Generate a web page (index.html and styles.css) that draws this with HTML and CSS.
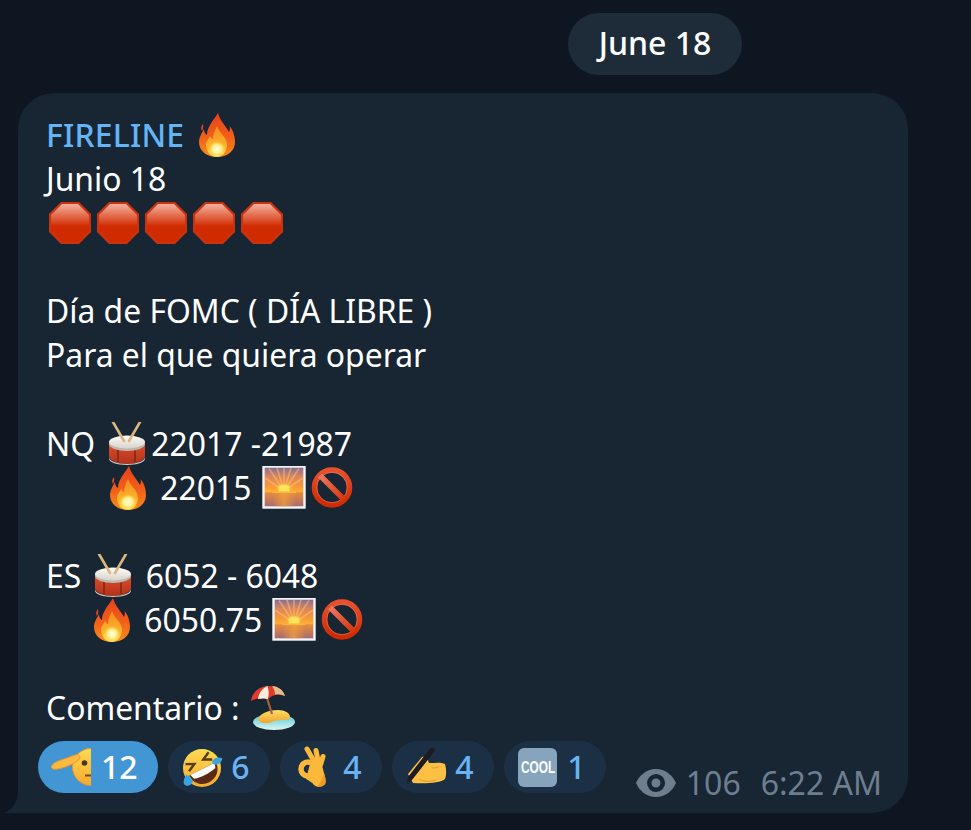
FILE: index.html
```html
<!DOCTYPE html>
<html lang="es">
<head>
<meta charset="utf-8">
<title>FIRELINE</title>
<link rel="stylesheet" href="styles.css">
</head>
<body>
<svg class="defs" width="0" height="0" aria-hidden="true">
  <defs>
    <linearGradient id="gFireOuter" x1="0" y1="0" x2="0" y2="1"><stop offset="0" stop-color="#e8401c"/><stop offset="0.55" stop-color="#f2601a"/><stop offset="1" stop-color="#f98c1c"/></linearGradient>
    <linearGradient id="gFireInner" x1="0" y1="0" x2="0" y2="1"><stop offset="0" stop-color="#f78a1e"/><stop offset="0.7" stop-color="#fbb82e"/><stop offset="1" stop-color="#ffe25c"/></linearGradient>
    <radialGradient id="gFireCore"><stop offset="0" stop-color="#fffde8"/><stop offset="0.55" stop-color="#fff08a"/><stop offset="1" stop-color="#ffd84a" stop-opacity="0"/></radialGradient>
    <linearGradient id="gStop" x1="0" y1="0" x2="0" y2="1"><stop offset="0" stop-color="#f4b0a0"/><stop offset="0.5" stop-color="#d84018"/><stop offset="0.58" stop-color="#d02c00"/><stop offset="1" stop-color="#cf2a00"/></linearGradient>
    <linearGradient id="gDrumBody" x1="0" y1="0" x2="0" y2="1"><stop offset="0" stop-color="#e0502c"/><stop offset="1" stop-color="#b2321a"/></linearGradient>
    <linearGradient id="gHead" x1="0" y1="0" x2="0" y2="1"><stop offset="0" stop-color="#fdfcf8"/><stop offset="1" stop-color="#d8d3ca"/></linearGradient>
    <linearGradient id="gSky" x1="0" y1="0" x2="0" y2="1"><stop offset="0" stop-color="#7a6a9c"/><stop offset="0.25" stop-color="#dc865c"/><stop offset="0.5" stop-color="#f99a38"/><stop offset="0.62" stop-color="#fdb234"/><stop offset="0.64" stop-color="#e88a3c"/><stop offset="1" stop-color="#a06a78"/></linearGradient>
    <linearGradient id="gWaterGlow" x1="0" y1="0" x2="1" y2="0"><stop offset="0.2" stop-color="#f6a238" stop-opacity="0"/><stop offset="0.5" stop-color="#f6a238" stop-opacity="0.700"/><stop offset="0.8" stop-color="#f6a238" stop-opacity="0"/></linearGradient>
    <radialGradient id="gSunGlow"><stop offset="0" stop-color="#fff08a"/><stop offset="0.5" stop-color="#ffe25a"/><stop offset="1" stop-color="#fcae34" stop-opacity="0"/></radialGradient>
    <linearGradient id="gNo" x1="0" y1="0" x2="0" y2="1"><stop offset="0" stop-color="#e8502e"/><stop offset="1" stop-color="#cf2a00"/></linearGradient>
    <linearGradient id="gSlash" x1="0" y1="0" x2="1" y2="1"><stop offset="0" stop-color="#ea7a62"/><stop offset="1" stop-color="#d8360c"/></linearGradient>
    <linearGradient id="gBeachWater" x1="0" y1="0" x2="0" y2="1"><stop offset="0" stop-color="#4fc6d6"/><stop offset="1" stop-color="#dcf6f2"/></linearGradient>
    <linearGradient id="gSand" x1="0" y1="0" x2="0" y2="1"><stop offset="0" stop-color="#fce06a"/><stop offset="1" stop-color="#f2a22a"/></linearGradient>
    <linearGradient id="gFace" x1="0" y1="0" x2="0" y2="1"><stop offset="0" stop-color="#fddb52"/><stop offset="1" stop-color="#f6a92c"/></linearGradient>
    <clipPath id="cSalute"><rect x="0" y="0" width="40" height="42"/></clipPath>
    <symbol id="i-fire" viewBox="0 0 48 44">
      <path d="M10 11C8 13 7.500 16 9 18C10 16 10.500 14 10 11Z" fill="#ea4a1c"/>
      <path d="M25 0C27 8 33 13 36 19C37 17 37 15 36.500 13C41 18 42 25 42 29C42 38 34 44 24 44C14 44 6 38 6 29C6 24 9 20 11 16C11 19 12 21 14 22C14 14 20 8 25 0Z" fill="url(#gFireOuter)"/>
      <path d="M24 13C26 20 34 24 34 32C34 39 29 44 24 44C18 44 13 39 13 32C13 28 16 26 17 23C18 25 19 26 20 26C20 21 22 17 24 13Z" fill="url(#gFireInner)"/>
      <ellipse cx="24" cy="36" rx="8.500" ry="8" fill="url(#gFireCore)"/>
    </symbol>
    <symbol id="i-stop" viewBox="0 0 48 44">
      <polygon points="15,1 33,1 45,13 45,31 33,43 15,43 3,31 3,13" fill="#c9320e"/>
      <polygon points="16,3 32,3 43,14 43,30 32,41 16,41 5,30 5,14" fill="url(#gStop)"/>
    </symbol>
    <symbol id="i-drum" viewBox="0 0 48 44">
      <path d="M6 20V34C6 38 14 42 24 42C34 42 42 38 42 34V20Z" fill="url(#gDrumBody)"/>
      <path d="M6 35C6 39 14 42 24 42C34 42 42 39 42 35V37C42 40 34 43 24 43C14 43 6 40 6 37Z" fill="#cfcac0"/>
      <path d="M15 27V40M32 27V40" stroke="#7a2412" stroke-width="1.400"/>
      <ellipse cx="24" cy="22" rx="18" ry="7" fill="#bdb7ad"/>
      <ellipse cx="24" cy="20" rx="18" ry="6.500" fill="url(#gHead)"/>
      <path d="M10 0L21 19M37 0L26 19" stroke="#d9b77e" stroke-width="2.600" stroke-linecap="round"/>
    </symbol>
    <symbol id="i-sun" viewBox="0 0 48 44">
      <rect x="3.500" y="0.500" width="41" height="41" fill="url(#gSky)" stroke="#f4f5f6" stroke-width="2.400"/>
      <path d="M24 25L9 2.500M24 25L17 2M24 25L24 2M24 25L31 2M24 25L39 2.500M24 25L5 12M24 25L43 12" stroke="#fcc67a" stroke-width="1.700" opacity="0.500"/>
      <rect x="4.700" y="26" width="38.600" height="14.300" fill="url(#gWaterGlow)"/>
      <path d="M15 26A9 9 0 0 1 33 26Z" fill="url(#gSunGlow)"/>
      <path d="M18.500 25.500A5.500 5.500 0 0 1 29.500 25.500Z" fill="#ffe45c"/>
      <path d="M12 26.500H36" stroke="#fcc04a" stroke-width="1.200" opacity="0.700"/>
    </symbol>
    <symbol id="i-no" viewBox="0 0 48 44">
      <circle cx="24" cy="21.500" r="17.500" fill="none" stroke="url(#gNo)" stroke-width="5.500"/>
      <circle cx="24" cy="21.500" r="15.200" fill="none" stroke="#f08a74" stroke-width="0.900" opacity="0.600"/>
      <path d="M12 9.500L36 33.500" stroke="url(#gSlash)" stroke-width="5.500"/>
    </symbol>
    <symbol id="i-beach" viewBox="0 0 48 44">
      <ellipse cx="26" cy="36" rx="21" ry="8" fill="url(#gBeachWater)"/>
      <path d="M10 33C12 27 22 24 30 24C37 24 42 27 42 31C42 34 38 34 33 34C26 34 22 38 16 37C13 36.500 10 35 10 33Z" fill="url(#gSand)"/>
      <path d="M19 12L24 28" stroke="#a5623c" stroke-width="2.200"/>
      <path d="M3 15C4 5 13 0 21 0C29 0 35 3 37 10C30 7.500 24 9 20 13C14 11.500 8 12.500 3 15Z" fill="#e3392f"/>
      <path d="M10 13C11 6 15 2 19.500 0C21 4 21 9 20 13C16 12 13 12.500 10 13Z" fill="#f6eedd"/>
      <path d="M24 0C30 0.500 35 3.500 37 10C33 8.500 30 8 27 8.500C27 5 26 3 24 0Z" fill="#dcc08e"/>
    </symbol>
  </defs>
</svg>

<main class="chat">
  <div class="date-row"><div class="date">June 18</div></div>
  <article class="bubble">
    <svg class="tail" width="14" height="23" viewBox="0 0 14 23" aria-hidden="true"><path d="M14 0C14 12 9 19 0 23H14Z" fill="#182533"/></svg>
    <div class="line"><span class="author">FIRELINE</span> <span class="em"><svg width="48" height="44"><use href="#i-fire"/></svg></span></div>
    <div class="line">Junio 18</div>
    <div class="line"><span class="em"><svg width="48" height="44"><use href="#i-stop"/></svg></span><span class="em"><svg width="48" height="44"><use href="#i-stop"/></svg></span><span class="em"><svg width="48" height="44"><use href="#i-stop"/></svg></span><span class="em"><svg width="48" height="44"><use href="#i-stop"/></svg></span><span class="em"><svg width="48" height="44"><use href="#i-stop"/></svg></span></div>
    <div class="line"></div>
    <div class="line">Día de FOMC ( DÍA LIBRE )</div>
    <div class="line">Para el que quiera operar</div>
    <div class="line"></div>
    <div class="line">NQ <span class="em"><svg width="48" height="44"><use href="#i-drum"/></svg></span>22017 -21987</div>
    <div class="line indent-nq"><span class="em"><svg width="48" height="44"><use href="#i-fire"/></svg></span> 22015 <span class="em"><svg width="48" height="44"><use href="#i-sun"/></svg></span><span class="em"><svg width="48" height="44"><use href="#i-no"/></svg></span></div>
    <div class="line"></div>
    <div class="line">ES <span class="em"><svg width="48" height="44"><use href="#i-drum"/></svg></span> 6052 - 6048</div>
    <div class="line indent-es"><span class="em"><svg width="48" height="44"><use href="#i-fire"/></svg></span> 6050.75 <span class="em"><svg width="48" height="44"><use href="#i-sun"/></svg></span><span class="em"><svg width="48" height="44"><use href="#i-no"/></svg></span></div>
    <div class="line"></div>
    <div class="line">Comentario : <span class="em"><svg width="48" height="44"><use href="#i-beach"/></svg></span></div>

    <footer class="footer">
      <div class="reactions">
        <div class="reaction active">
          <svg class="r-icon" width="42" height="42" viewBox="0 0 42 42" aria-hidden="true">
            <g clip-path="url(#cSalute)">
              <circle cx="40" cy="21" r="18.500" fill="url(#gFace)" stroke="#f0962a" stroke-width="1"/>
              <circle cx="33.500" cy="17" r="2.800" fill="#4a3424"/>
              <path d="M34 29.500H40" stroke="#6e4a20" stroke-width="2"/>
              <path d="M0.500 21C1 17 7 15 13 13C18 11.500 23 9 26 8.500C29 8.500 30 12 27.500 14C23 18 15 21 9 22.500C5 23.500 1 24 0.500 21Z" fill="#fbb93f" stroke="#f0962a" stroke-width="1"/>
            </g>
          </svg>
          <span class="count">12</span>
        </div>
        <div class="reaction">
          <svg class="r-icon" width="42" height="42" viewBox="0 0 42 42" aria-hidden="true">
            <circle cx="21" cy="22" r="19" fill="url(#gFace)"/>
            <g transform="rotate(-27 21 22)">
              <path d="M6 23H36C36 32 29 38 21 38C13 38 6 32 6 23Z" fill="#5b2a12"/>
              <path d="M7.500 23H34.500L33 28C26 30 16 30 9 28Z" fill="#ffffff"/>
              <path d="M8 11L16 15L8 19M34 11L26 15L34 19" fill="none" stroke="#5b3a1a" stroke-width="2.400"/>
            </g>
            <path d="M32 14C35 11 39 11 41.500 12.500C40 18 35 20 32 18C31 17 31 15 32 14Z" fill="#3aa5e0"/>
            <path d="M5 29C8 29 11 32 12 36C10 40 5 41 3 38C2 36 3 32 5 29Z" fill="#3aa5e0"/>
          </svg>
          <span class="count">6</span>
        </div>
        <div class="reaction">
          <svg class="r-icon" width="42" height="42" viewBox="0 0 42 42" aria-hidden="true">
            <path d="M14 3L22 17M23 4.500L25.500 17M30 10.500L27.500 19" fill="none" stroke="#fbb83a" stroke-width="5" stroke-linecap="round"/>
            <path d="M18 14C23 14 29 17 30 23C31 28 33 32 32.500 37C31 41 24 42 21 39C19 36 16 35 13 33Z" fill="#fbb83a"/>
            <circle cx="15" cy="23" r="7" fill="none" stroke="#fbb83a" stroke-width="5.500"/>
            <path d="M24 41C28 41 31.500 40 32.500 37C33 33 32 30 31 27C29 33 27 37 24 41Z" fill="#ef9c28"/>
          </svg>
          <span class="count">4</span>
        </div>
        <div class="reaction">
          <svg class="r-icon" width="42" height="42" viewBox="0 0 42 42" aria-hidden="true">
            <path d="M3 28L17 11C20 10 23 13 24 17C30 17 36 16 40 18C41.500 23 41.500 29 40 33C36 37 20 38 8 37Z" fill="#fcc044"/>
            <path d="M14 33C19 36 25 36 31 34M34 20C32 22 30 22 27 22" fill="none" stroke="#e99a2a" stroke-width="1"/>
            <path d="M1.500 38L3 31L25 2.500C26 1.500 28 1.500 29 2.500C30 3.500 30 5 29 6L7 34Z" fill="#1c1c22"/>
          </svg>
          <span class="count">4</span>
        </div>
        <div class="reaction">
          <div class="cool"><span class="cool-text">COOL</span></div>
          <span class="count">1</span>
        </div>
      </div>
      <div class="meta">
        <svg class="eye" width="40" height="28" viewBox="0 0 40 28" aria-hidden="true"><path fill-rule="evenodd" d="M20 0C30 0 37 7 40 14C37 21 30 28 20 28C10 28 3 21 0 14C3 7 10 0 20 0ZM20 5A9 9 0 1 0 20.100 23A9 9 0 1 0 20 5ZM20 9.500A4.500 4.500 0 1 1 19.900 18.500A4.500 4.500 0 1 1 20 9.500Z" fill="#6d7f8f"/></svg>
        <span class="views">106</span>
        <time class="time">6:22 AM</time>
      </div>
    </footer>
  </article>
</main>
</body>
</html>
```

FILE: styles.css
```css
html, body {
  margin: 0;
  padding: 0;
  height: 100%;
  background: #0e1621;
}

body {
  font-family: "Noto Sans", "Open Sans", sans-serif;
  color: #ffffff;
  overflow: hidden;
}

.defs {
  display: block;
}

.chat {
  display: flex;
  flex-direction: column;
  gap: 18px;
  padding: 13px 63px 0 18px;
}

.date-row {
  display: flex;
  padding-left: 550px;
}

.date {
  width: 174px;
  height: 62px;
  border-radius: 31px;
  background: #1e2c3a;
  font-size: 32px;
  font-weight: 500;
  line-height: 60px;
  text-align: center;
}

.bubble {
  position: relative;
  box-sizing: border-box;
  width: 890px;
  height: 720px;
  padding: 20px 26px 20px 28px;
  border-radius: 36px 36px 36px 0;
  background: #182533;
  font-size: 31.850px;
}

.tail {
  position: absolute;
  left: -14px;
  bottom: 0;
}

.line {
  height: 44.100px;
  line-height: 44px;
  white-space: pre;
}

.indent-nq {
  padding-left: 58px;
}

.indent-es {
  padding-left: 42px;
}

.author {
  color: #64b5f6;
  font-weight: 500;
  letter-spacing: 0.200px;
}

.em {
  display: inline-block;
  width: 48px;
  height: 44px;
  vertical-align: top;
}

.em svg {
  display: block;
}

.footer {
  display: flex;
  justify-content: space-between;
  align-items: flex-end;
  margin: 11px 0 0 -8px;
}

.reactions {
  display: flex;
  gap: 10px;
}

.reaction {
  display: flex;
  align-items: center;
  gap: 8px;
  box-sizing: border-box;
  height: 52px;
  padding: 0 20.700px 0 13px;
  border-radius: 26px;
  background: #1b3045;
  color: #6ab3f3;
  font-size: 32px;
  font-weight: 500;
}

.reaction.active {
  background: #4296d3;
  color: #ffffff;
}

.r-icon {
  display: block;
  flex: none;
}

.count {
  line-height: 52px;
}

.cool {
  display: flex;
  flex: none;
  justify-content: center;
  align-items: center;
  box-sizing: border-box;
  width: 39px;
  height: 39px;
  margin: 0 2px 0 1px;
  border-radius: 6px;
  background: #86a4bb;
  overflow: hidden;
}

.cool-text {
  flex: none;
  color: #ffffff;
  font-family: "Liberation Sans", sans-serif;
  font-size: 16px;
  font-weight: 700;
  line-height: 39px;
  transform: scaleX(0.740);
}

.meta {
  display: flex;
  align-items: center;
  color: #6d7f8f;
  font-size: 32px;
  line-height: 30px;
  margin-bottom: -5px;
}

.eye {
  display: block;
  margin-right: 10px;
}

.views {
  margin-right: 20px;
}
```
